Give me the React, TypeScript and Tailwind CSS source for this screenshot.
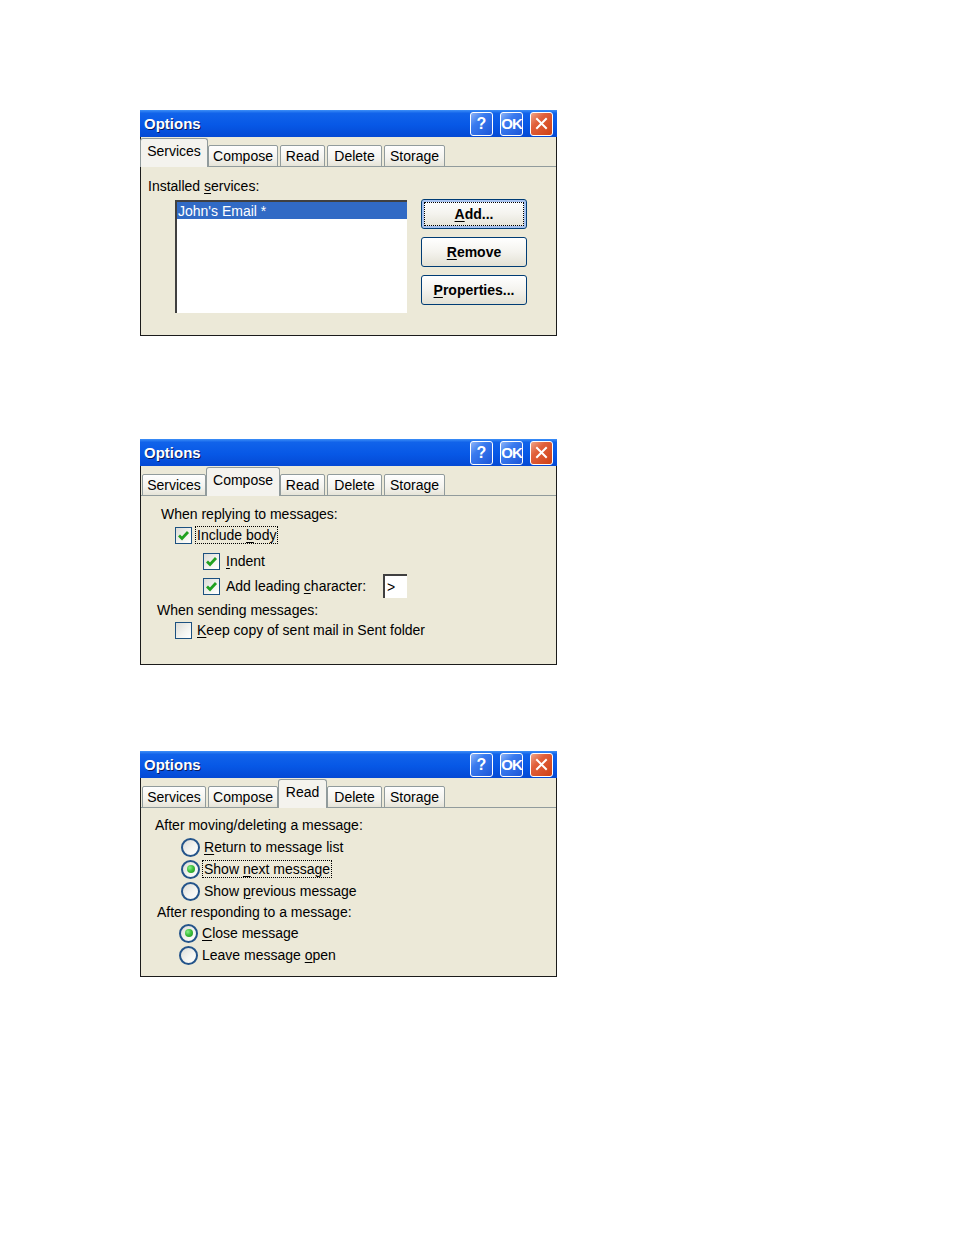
import type { ReactNode } from 'react'

const FONT = '"Liberation Sans", Arial, sans-serif'

const TABS = [
  { label: 'Services', width: 'w-[64px]' },
  { label: 'Compose', width: 'w-[70px]' },
  { label: 'Read', width: 'w-[45px]' },
  { label: 'Delete', width: 'w-[55px]' },
  { label: 'Storage', width: 'w-[61px]' },
]

function U({ children }: { children: ReactNode }) {
  return <span className="underline underline-offset-2">{children}</span>
}

function TitleButton({ kind }: { kind: 'help' | 'ok' | 'close' }) {
  const bg =
    kind === 'close'
      ? 'bg-[linear-gradient(135deg,#f0a68a_0%,#e1603b_35%,#cf4115_100%)]'
      : 'bg-[linear-gradient(135deg,#8fb5f7_0%,#3a7bef_35%,#1d56d8_100%)]'
  return (
    <div
      className={`flex h-[24px] w-[23px] items-center justify-center rounded-[3px] border border-white text-[16px] font-bold leading-none text-white ${bg}`}
    >
      {kind === 'help' ? '?' : null}
      {kind === 'ok' ? <span className="text-[15px] tracking-[-1px]">OK</span> : null}
      {kind === 'close' ? (
        <svg width="13" height="13" viewBox="0 0 13 13">
          <path d="M2 2 L11 11 M11 2 L2 11" stroke="#fff" strokeWidth="2" strokeLinecap="square" />
        </svg>
      ) : null}
    </div>
  )
}

function TabStrip({ selected }: { selected: number }) {
  return (
    <div className="relative h-[30px] border-b border-[#919b9c]">
      <div className="absolute bottom-[-1px] left-[1px] flex items-end gap-[2px]">
        {TABS.map((tab, index) =>
          index === selected ? (
            <div
              key={tab.label}
              className={`relative z-10 -mx-[2px] box-content flex h-[26px] items-start justify-center rounded-t-[3px] border border-b-0 border-[#919b9c] bg-[#f4f3ee] px-[1px] pt-[2px] text-[14px] text-black ${tab.width}`}
            >
              {tab.label}
            </div>
          ) : (
            <div
              key={tab.label}
              className={`flex h-[22px] items-center justify-center rounded-t-[2px] border border-[#919b9c] bg-[linear-gradient(to_bottom,#fefefe_0%,#f4f3ee_60%,#e6e4d8_100%)] text-[14px] text-black ${tab.width}`}
            >
              {tab.label}
            </div>
          ),
        )}
      </div>
    </div>
  )
}

function Dialog({ selected, children }: { selected: number; children: ReactNode }) {
  return (
    <div className="flex h-[226px] w-[417px] flex-col bg-[#ece9d8]">
      <div className="flex h-[27px] shrink-0 items-center justify-between bg-[linear-gradient(to_bottom,#3d8ff7_0%,#1163ea_12%,#0758e6_55%,#0449d4_100%)] pl-[4px] pr-[4px]">
        <span className="pt-[1px] text-[15px] font-bold text-white [text-shadow:1px_1px_0_#0a1a5e]">Options</span>
        <div className="flex items-center gap-[7px]">
          <TitleButton kind="help" />
          <TitleButton kind="ok" />
          <TitleButton kind="close" />
        </div>
      </div>
      <div className="flex flex-1 flex-col border-x border-b border-[#1b1b1b] border-t-0">
        <TabStrip selected={selected} />
        <div className="flex-1">{children}</div>
      </div>
    </div>
  )
}

function Checkbox({ checked }: { checked: boolean }) {
  return (
    <div className="flex h-[17px] w-[17px] shrink-0 items-center justify-center border border-[#1c5180] bg-[linear-gradient(135deg,#dcdcd7_0%,#f4f4f0_60%,#ffffff_100%)]">
      {checked ? (
        <svg width="13" height="13" viewBox="0 0 13 13">
          <path d="M2 6.5 L5 9.5 L11 3" fill="none" stroke="#21a121" strokeWidth="2.8" />
        </svg>
      ) : null}
    </div>
  )
}

function Radio({ checked }: { checked: boolean }) {
  return (
    <div className="flex h-[19px] w-[19px] shrink-0 items-center justify-center rounded-full border-2 border-[#24548a] bg-[linear-gradient(135deg,#dcdcd7_0%,#f4f4f0_55%,#ffffff_100%)]">
      {checked ? (
        <div className="h-[8px] w-[8px] rounded-full bg-[radial-gradient(circle_at_35%_35%,#8af08a_0%,#3fc13f_45%,#1c8f1c_100%)]" />
      ) : null}
    </div>
  )
}

function XpButton({ children, focused }: { children: ReactNode; focused?: boolean }) {
  return (
    <div
      className={`flex h-[30px] w-[106px] items-center justify-center rounded-[3px] border border-[#003c74] bg-[linear-gradient(to_bottom,#ffffff_0%,#f4f3ee_50%,#e3e1d4_100%)] text-[14px] font-bold text-black ${
        focused ? 'shadow-[inset_0_0_0_2px_#a7c3f0]' : ''
      }`}
    >
      {focused ? (
        <div className="flex h-[22px] w-[98px] items-center justify-center outline-1 outline-dotted outline-black">
          {children}
        </div>
      ) : (
        children
      )}
    </div>
  )
}

function ServicesDialog() {
  return (
    <Dialog selected={0}>
      <div className="pl-[7px]">
        <div className="mt-[11px] h-[16px] text-[14px] leading-[16px]">
          Installed <U>s</U>ervices:
        </div>
        <div className="mt-[5px] flex items-start">
          <div className="ml-[27px] mt-[1px] h-[113px] w-[232px] border-l-2 border-t-2 border-l-[#404040] border-t-[#404040] bg-white">
            <div className="flex h-[17px] items-center bg-[#316ac5] text-[14px] leading-[16px] text-white">
              <span className="pl-[1px]">John's Email *</span>
            </div>
          </div>
          <div className="ml-[14px] flex flex-col gap-[8px]">
            <XpButton focused>
              <span>
                <U>A</U>dd...
              </span>
            </XpButton>
            <XpButton>
              <span>
                <U>R</U>emove
              </span>
            </XpButton>
            <XpButton>
              <span>
                <U>P</U>roperties...
              </span>
            </XpButton>
          </div>
        </div>
      </div>
    </Dialog>
  )
}

function ComposeDialog() {
  return (
    <Dialog selected={1}>
      <div className="text-[14px] leading-[16px]">
        <div className="ml-[20px] mt-[10px] h-[16px]">When replying to messages:</div>
        <div className="ml-[34px] mt-[3px] flex h-[20px] items-center">
          <Checkbox checked />
          <span className="ml-[4px] px-[1px] outline-1 outline-dotted outline-black">
            Include <U>b</U>ody
          </span>
        </div>
        <div className="ml-[62px] mt-[6px] flex h-[20px] items-center">
          <Checkbox checked />
          <span className="ml-[6px]">
            <U>I</U>ndent
          </span>
        </div>
        <div className="ml-[62px] mt-[3px] flex h-[24px] items-center">
          <Checkbox checked />
          <span className="ml-[6px]">
            Add leading <U>c</U>haracter:
          </span>
          <div className="ml-[17px] flex h-[24px] w-[24px] items-center border-l-2 border-t-2 border-l-[#404040] border-t-[#404040] bg-white pl-[2px]">
            &gt;
          </div>
        </div>
        <div className="ml-[16px] mt-[4px] h-[16px]">When sending messages:</div>
        <div className="ml-[34px] mt-[2px] flex h-[20px] items-center">
          <Checkbox checked={false} />
          <span className="ml-[5px]">
            <U>K</U>eep copy of sent mail in Sent folder
          </span>
        </div>
      </div>
    </Dialog>
  )
}

function ReadDialog() {
  return (
    <Dialog selected={2}>
      <div className="text-[14px] leading-[16px]">
        <div className="ml-[14px] mt-[9px] h-[16px]">After moving/deleting a message:</div>
        <div className="ml-[40px] mt-[3px] flex flex-col">
          <div className="flex h-[22px] items-center">
            <Radio checked={false} />
            <span className="ml-[4px]">
              <U>R</U>eturn to message list
            </span>
          </div>
          <div className="flex h-[22px] items-center">
            <Radio checked />
            <span className="ml-[3px] px-[1px] outline-1 outline-dotted outline-black">
              Show <U>n</U>ext message
            </span>
          </div>
          <div className="flex h-[22px] items-center">
            <Radio checked={false} />
            <span className="ml-[4px]">
              Show <U>p</U>revious message
            </span>
          </div>
        </div>
        <div className="ml-[16px] mt-[2px] h-[16px]">After responding to a message:</div>
        <div className="ml-[38px] mt-[2px] flex flex-col">
          <div className="flex h-[22px] items-center">
            <Radio checked />
            <span className="ml-[4px]">
              <U>C</U>lose message
            </span>
          </div>
          <div className="flex h-[22px] items-center">
            <Radio checked={false} />
            <span className="ml-[4px]">
              Leave message <U>o</U>pen
            </span>
          </div>
        </div>
      </div>
    </Dialog>
  )
}

export default function App() {
  return (
    <div className="min-h-[1235px] w-[954px] bg-white pl-[140px] pt-[110px] text-black" style={{ fontFamily: FONT }}>
      <ServicesDialog />
      <div className="mt-[103px]">
        <ComposeDialog />
      </div>
      <div className="mt-[86px]">
        <ReadDialog />
      </div>
    </div>
  )
}
